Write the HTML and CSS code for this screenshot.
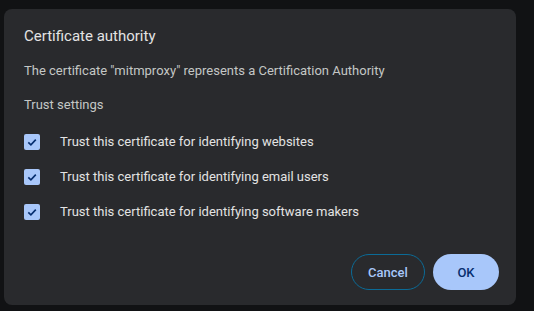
FILE: index.html
```html
<!DOCTYPE html>
<html lang="en">
<head>
  <meta charset="UTF-8">
  <title>Certificate authority</title>
  <link rel="stylesheet" href="styles.css">
</head>
<body>
  <div class="backdrop">
    <div class="dialog">
      <h1 class="title">Certificate authority</h1>
      <p class="desc">The certificate "mitmproxy" represents a Certification Authority</p>
      <p class="section">Trust settings</p>
      <div class="options">
        <label class="option">
          <span class="check"><svg viewBox="0 0 16 16"><path d="M4.3 8.4l2.6 2.5 4.9-5.3"/></svg></span>
          <span>Trust this certificate for identifying websites</span>
        </label>
        <label class="option">
          <span class="check"><svg viewBox="0 0 16 16"><path d="M4.3 8.4l2.6 2.5 4.9-5.3"/></svg></span>
          <span>Trust this certificate for identifying email users</span>
        </label>
        <label class="option">
          <span class="check"><svg viewBox="0 0 16 16"><path d="M4.3 8.4l2.6 2.5 4.9-5.3"/></svg></span>
          <span>Trust this certificate for identifying software makers</span>
        </label>
      </div>
      <div class="actions">
        <button class="btn btn-cancel">Cancel</button>
        <button class="btn btn-ok">OK</button>
      </div>
    </div>
  </div>
</body>
</html>
```

FILE: styles.css
```css
* { box-sizing: border-box; margin: 0; padding: 0; }
body {
  font-family: Roboto, 'Liberation Sans', sans-serif;
  background: #111214;
  color: #e3e3e3;
  font-size: 13px;
}
.backdrop {
  padding: 9px 18px 6px 4px;
}
.dialog {
  width: 512px;
  height: 296px;
  background: #292a2d;
  border-radius: 8px;
  padding: 17px 17px 15px 20px;
  display: flex;
  flex-direction: column;
}
.title {
  font-size: 15px;
  font-weight: 400;
  line-height: 20px;
  color: #e3e3e3;
}
.desc {
  margin-top: 15px;
  line-height: 20px;
  color: #c4c7c5;
}
.section {
  margin-top: 14px;
  line-height: 20px;
  color: #c4c7c5;
}
.options {
  margin-top: 9px;
  display: flex;
  flex-direction: column;
}
.option {
  height: 35px;
  display: flex;
  align-items: center;
  gap: 20px;
  color: #e3e3e3;
}
.check {
  width: 16px;
  height: 16px;
  border-radius: 2px;
  background: #a8c7fa;
  display: flex;
}
.check svg {
  width: 16px;
  height: 16px;
  fill: none;
  stroke: #062e6f;
  stroke-width: 1.6;
}
.actions {
  margin-top: auto;
  display: flex;
  justify-content: flex-end;
  gap: 8px;
}
.btn {
  height: 36px;
  border-radius: 18px;
  font-family: inherit;
  font-size: 13px;
  font-weight: 500;
  cursor: pointer;
}
.btn-cancel {
  width: 74px;
  background: transparent;
  border: 1px solid #0b6b97;
  color: #a8c7fa;
}
.btn-ok {
  width: 66px;
  background: #a8c7fa;
  border: none;
  color: #062e6f;
}
```
